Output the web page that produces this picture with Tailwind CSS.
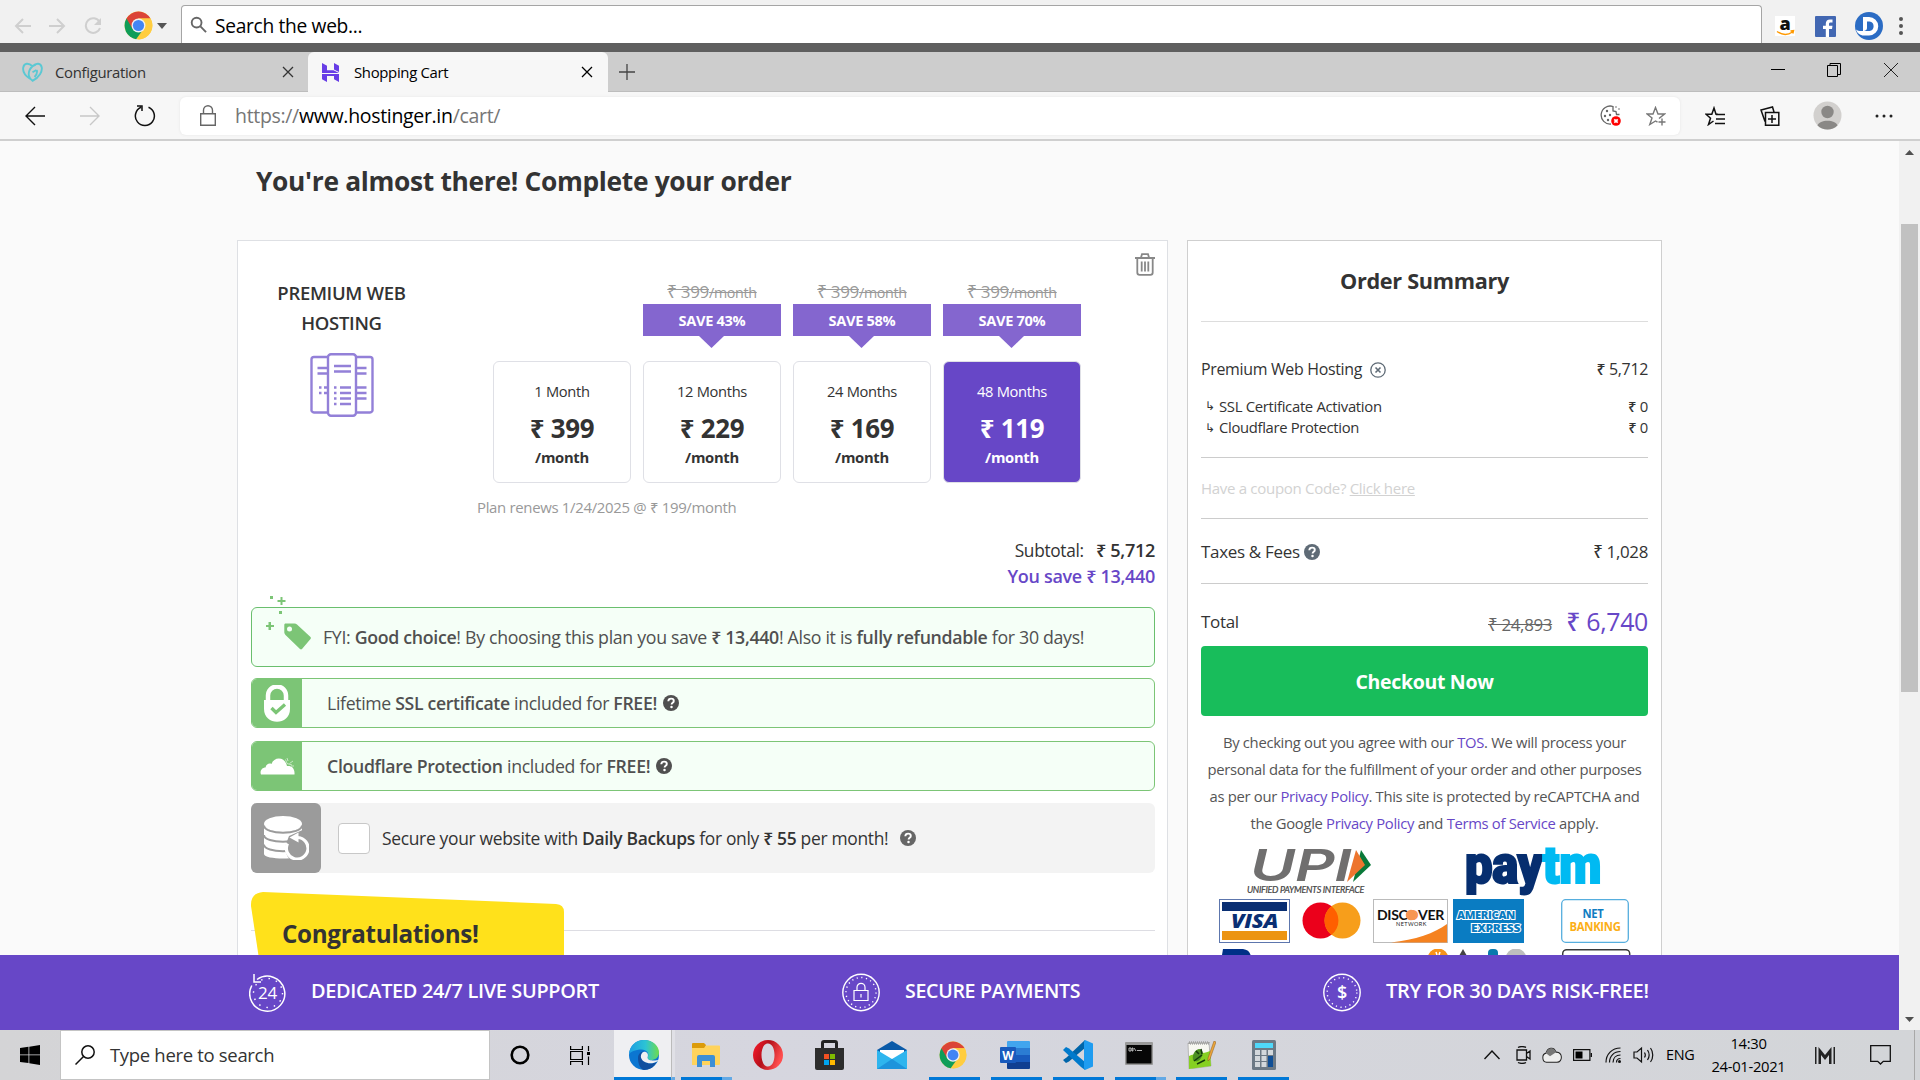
<!DOCTYPE html>
<html lang="en">
<head>
<meta charset="utf-8">
<title>Shopping Cart</title>
<script src="https://cdn.jsdelivr.net/npm/@tailwindcss/browser@4"></script>
</head>
<body class="w-[1920px] h-[1080px] overflow-hidden bg-[#fafafa] font-['Open_Sans','Noto_Sans',sans-serif] tracking-[-0.32px] text-[#333] flex flex-col">

<svg class="hidden">
  <symbol id="chrome" viewBox="0 0 48 48">
    <circle cx="24" cy="24" r="23" fill="#ffcd40"/>
    <path d="M24 24 4.1 12.5A23 23 0 0 0 20 46.7L32 30z" fill="#0f9d58"/>
    <path d="M24 12.5h19.9A23 23 0 0 0 4.1 12.5L14 29.5z" fill="#db4437"/>
    <path d="M34 29.500 24 47a23 23 0 0 0 19.900-34.500H24z" fill="#ffcd40"/>
    <circle cx="24" cy="24" r="11.500" fill="#f1f1f1"/>
    <circle cx="24" cy="24" r="9.300" fill="#4285f4"/>
  </symbol>
  <symbol id="question" viewBox="0 0 16 16">
    <circle cx="8" cy="8" r="8" fill="currentColor"/>
    <path d="M5.300 6.200C5.400 4.500 6.500 3.600 8.100 3.600c1.600 0 2.700.9 2.700 2.300 0 1.900-2.200 1.900-2.200 3.500" fill="none" stroke="#fff" stroke-width="1.900"/>
    <circle cx="8.500" cy="11.900" r="1.250" fill="#fff"/>
  </symbol>
  <symbol id="close" viewBox="0 0 12 12"><path d="M1 1l10 10M11 1 1 11" stroke="currentColor" stroke-width="1.300"/></symbol>
</svg>

<!-- outer search bar -->
<header class="h-[43px] shrink-0 bg-[#f1f1f1] flex">
  <div class="flex items-center pt-2 pl-[14px] text-[#cfcfcf]">
    <svg class="w-[18px] h-[18px]" viewBox="0 0 18 18" fill="none" stroke="currentColor" stroke-width="2"><path d="M17 9H2M9 2 2 9l7 7"/></svg>
    <svg class="w-[18px] h-[18px] ml-4" viewBox="0 0 18 18" fill="none" stroke="currentColor" stroke-width="2"><path d="M1 9h15M9 2l7 7-7 7"/></svg>
    <svg class="w-[18px] h-[18px] ml-[18px]" viewBox="0 0 18 18" fill="none" stroke="currentColor" stroke-width="2"><path d="M15.500 5A7.300 7.300 0 1 0 16 11"/><path d="M17 1v7h-7z" fill="currentColor" stroke="none"/></svg>
    <svg class="w-[29px] h-[29px] ml-[22px]"><use href="#chrome"/></svg>
    <svg class="w-[10px] h-[6px] ml-1" viewBox="0 0 10 6"><path d="M0 0h10L5 6z" fill="#555"/></svg>
  </div>
  <div class="ml-[14px] mt-[5px] w-[1581px] border border-b-0 border-[#a5a5a5] rounded-t bg-white flex items-center pl-2 pt-1">
    <svg class="w-[17px] h-[17px] -mt-1" viewBox="0 0 18 18" fill="none" stroke="#666" stroke-width="2"><circle cx="7" cy="7" r="5.200"/><path d="m11 11 6 6"/></svg>
    <span class="ml-2 text-[19.200px] text-black">Search the web...</span>
  </div>
  <div class="flex items-center pt-[9px] ml-[13px]">
    <svg class="w-5 h-5 overflow-visible" viewBox="0 0 20 20"><rect width="20" height="20" fill="#fff"/><text x="10" y="14" text-anchor="middle" font-family="Open Sans, sans-serif" font-weight="800" font-size="18" fill="#111">a</text><path d="M2 15.500c5 3.500 11 3.500 15.500.5M15.500 15l3-.3-.7 2.800" fill="none" stroke="#f90" stroke-width="1.500"/></svg>
    <svg class="w-[21px] h-[21px] ml-5" viewBox="0 0 21 21"><rect width="21" height="21" rx="1" fill="#4267b2"/><path d="M14 21v-8h3l.5-3.200H14V8c0-1 .4-1.600 1.700-1.600h1.800V3.600C17 3.500 16 3.400 15 3.400c-2.600 0-4.200 1.500-4.200 4.200v2.200H8V13h2.800v8z" fill="#fff"/></svg>
    <svg class="w-7 h-7 ml-[19px]" viewBox="0 0 28 28"><circle cx="14" cy="14" r="14" fill="#2b6cc4"/><path d="M8 5h6a9 9 0 0 1 0 18.500H9C5 23.500 2 21 1 17.500c2 1.500 4 1.800 7 1.500z" fill="#fff"/><path d="M12 9.500h2.500a4.800 4.800 0 0 1 0 9.500H9c2-.4 3-1.500 3-3z" fill="#2b6cc4"/></svg>
    <svg class="w-1 h-5 ml-[16px]" viewBox="0 0 4 20" fill="#555"><circle cx="2" cy="3" r="2"/><circle cx="2" cy="10" r="2"/><circle cx="2" cy="17" r="2"/></svg>
  </div>
</header>
<div class="h-[9px] shrink-0 bg-[#5f5f5f]"></div>

<!-- tab strip -->
<div class="h-10 shrink-0 bg-[#cdcdcd] flex text-[14.900px] leading-5 shadow-[inset_0_-1px_0_#bdbdbd]">
  <div class="w-[308px] flex items-center pl-[22px]">
    <svg class="w-[21px] h-5" viewBox="0 0 21 20" fill="none" stroke="#5bc8d3" stroke-width="1.900"><path d="M8 16.800C3 13.500.5 9 1.300 5.200 2.200 1 6.500.5 10.500 4.300c4-3.800 8.300-3.300 9.200.9.800 4-2.200 10-9.200 13.600-3.500-2-5-7-2.500-11.500C9.500 4.500 11.500 3 14 2.500M14.500 8l-4 2.300M14.800 8c.7 3-.3 5.200-2.300 7"/></svg>
    <span class="ml-3 -mt-px">Configuration</span>
    <svg class="w-3 h-3 ml-auto mr-[14px] text-[#333]"><use href="#close"/></svg>
  </div>
  <div class="w-[300px] h-10 bg-[#f7f7f7] rounded-t-md flex items-center pl-[14px]">
    <svg class="w-[17px] h-[19px]" viewBox="0 0 17 19" fill="#673de6"><path d="M0 0l5 2.700v4.600h6.500L17 10H0zM12 0l5 2.700V9l-5-2.600zM0 11h17v8l-5-2.700V13H5v6l-5-2.700z"/></svg>
    <span class="ml-[15px] -mt-px text-black">Shopping Cart</span>
    <svg class="w-3 h-3 ml-auto mr-[15px] text-black"><use href="#close"/></svg>
  </div>
  <div class="flex items-center pl-[11px]"><svg class="w-4 h-4" viewBox="0 0 16 16" stroke="#444" stroke-width="1.300"><path d="M8 0v16M0 8h16"/></svg></div>
  <div class="ml-auto flex items-center text-black pr-[22px] pb-1">
    <svg class="w-[14px] h-3" viewBox="0 0 14 12"><path d="M0 5.500h14" stroke="#000"/></svg>
    <svg class="w-[14px] h-[14px] ml-[42px]" viewBox="0 0 14 14" fill="none" stroke="#000"><path d="M.5 2.500h10v11H.5zM3 2.500v-2h10.500v11h-3"/></svg>
    <svg class="w-[14px] h-[14px] ml-[43px]" viewBox="0 0 14 14" stroke="#222"><path d="M0 0l14 14M14 0 0 14"/></svg>
  </div>
</div>

<!-- address bar -->
<div class="h-[49px] shrink-0 bg-[#f7f7f7] border-b-2 border-[#cfcfcf] flex items-center">
  <svg class="w-5 h-5 ml-[25px]" viewBox="0 0 20 20" fill="none" stroke="#111" stroke-width="1.400"><path d="M20 10H1M10 1 1 10l9 9"/></svg>
  <svg class="w-5 h-5 ml-[35px]" viewBox="0 0 20 20" fill="none" stroke="#c8c8c8" stroke-width="1.400"><path d="M0 10h19M10 1l9 9-9 9"/></svg>
  <svg class="w-[22px] h-[22px] ml-[34px]" viewBox="0 0 22 22" fill="none" stroke="#111" stroke-width="1.500"><path d="M14.500 2.200A9.500 9.500 0 1 1 7 2.300M3 1h5v5"/></svg>
  <div class="ml-[24px] w-[1500px] h-[38px] bg-white rounded-md shadow-[0_0_3px_#e4e4e4] flex items-center pl-5">
    <svg class="w-4 h-[21px]" viewBox="0 0 16 21" fill="none" stroke="#666" stroke-width="1.400"><path d="M.7 8.700h14.600v11.500H.7zM3.500 8.500V5.200a4.500 4.500 0 0 1 9 0v3.300"/></svg>
    <span class="ml-[19px] text-[19.500px] text-[#767676]">https://<span class="text-black">www.hostinger.in</span>/cart/</span>
    <svg class="w-[21px] h-[21px] ml-auto" viewBox="0 0 21 21"><path d="M19.500 9.500h-3l-.5-3-3-.5V1.500A9 9 0 1 0 11 19" fill="none" stroke="#666" stroke-width="1.300"/><g fill="#666"><circle cx="7" cy="6" r="1.200"/><circle cx="5" cy="11" r="1.200"/><circle cx="10" cy="10" r="1.200"/><circle cx="8" cy="15" r="1.200"/><circle cx="16" cy="2" r=".8"/><circle cx="19" cy="4" r=".8"/></g><circle cx="16" cy="16" r="4.800" fill="#f00"/><path d="m14.300 14.300 3.400 3.400m0-3.400-3.400 3.400" stroke="#fff" stroke-width="1.700"/></svg>
    <svg class="w-5 h-5 ml-[25px] mr-[14px]" viewBox="0 0 20 20" fill="none" stroke="#777" stroke-width="1.400"><path d="m13 12.500 5.500-4.500H12L9.500 1.500 7 8H1l5 4-2.200 6.500L9.500 15l2 1.200M16 12.500v7M12.500 16h7"/></svg>
  </div>
  <svg class="w-5 h-5 ml-[25px]" viewBox="0 0 20 20" fill="none" stroke="#111" stroke-width="1.500"><path d="M13 8.300h-2L9 2 6.800 8.200H1l4.500 4L3.500 18.500l5-3.500M11 8.500h9M11 13h9M10 17.500h10"/></svg>
  <svg class="w-5 h-5 ml-[35px]" viewBox="0 0 20 20" fill="none" stroke="#111" stroke-width="1.500"><path d="M5.500 6.500h13.300v12.700H5.500zM12 9v8M8 13h8M5 15.500 1 4l11.500-3 1.500 5"/></svg>
  <svg class="w-[29px] h-[29px] ml-[33px]" viewBox="0 0 29 29"><circle cx="14.500" cy="14.500" r="14" fill="#d2d0ce"/><circle cx="14.500" cy="11" r="6.200" fill="#8a8886"/><path d="M4.500 24.500c1.500-6.500 18.500-6.500 20 0-5 5.300-15 5.300-20 0z" fill="#8a8886"/></svg>
  <svg class="w-[18px] h-1 ml-[33px]" viewBox="0 0 18 4" fill="#222"><circle cx="2" cy="2" r="1.500"/><circle cx="9" cy="2" r="1.500"/><circle cx="16" cy="2" r="1.500"/></svg>
</div>

<!-- page + scrollbar -->
<div class="flex h-[889px] shrink-0">
 <div class="w-[1899px] flex flex-col">
  <main class="h-[814px] overflow-hidden pl-[237px]">
    <h1 class="ml-[19px] mt-[22px] h-[37px] leading-[37px] text-[26.350px] font-bold whitespace-nowrap">You're almost there! Complete your order</h1>
    <div class="mt-[40px] flex gap-[19px] items-start">

      <section class="w-[931px] h-[760px] bg-white border border-[#dee0e4] pl-[13px] pr-3">
        <div class="flex">
          <div class="w-[181px] flex flex-col items-center pt-[37px]">
            <h2 class="text-[18.500px] leading-[30px] font-semibold text-center">PREMIUM WEB<br>HOSTING</h2>
            <svg class="w-16 h-16 mt-[15px]" viewBox="0 0 64 64" fill="none" stroke="#9380d8" stroke-width="2.400"><rect x="18" y="1.300" width="28" height="61.400" rx="3"/><path d="M18 4H4a2.500 2.500 0 0 0-2.500 2.500v50A2.500 2.500 0 0 0 4 59.500h14M46 4h14a2.500 2.500 0 0 1 2.500 2.500v50a2.500 2.500 0 0 1-2.500 3H46M24 13h17M24 18.500h17M7.500 15H18M7.500 20.500H18M46 15h10.500M46 20.500h10.500M46 34.500h10.500M46 40h10.500M46 45.500h10.500M30 34.500h11M30 40h11M30 45.500h11M30 51h11M24 34.500h2.500M24 40h2.500M24 45.500h2.500M24 51h2.500M9 34.500h2.500M9 40h2.500M14 34.500h3M14 40h3"/></svg>
          </div>
          <div class="ml-[45px] pt-[37px]">
            <div class="pl-4 flex gap-3 items-end text-center">
              <div class="w-[138px] h-[122px] border border-[#dfe0e6] rounded-md flex flex-col items-center pt-[15px]">
                <span class="text-[14.700px] leading-7">1 Month</span>
                <span class="text-[25.900px] leading-[34px] mt-[6px] font-bold">₹ 399</span>
                <span class="text-[14.800px] leading-6 font-bold">/month</span>
              </div>
              <div class="w-[138px]">
                <div class="h-[26px] leading-[28px] text-[#999] line-through text-[14.300px]"><span class="text-[17px]">₹ 399</span>/month</div>
                <div class="h-8 leading-8 bg-[#8466cf] text-white font-bold text-[14.600px]">SAVE 43%</div>
                <svg class="ml-14 w-[25px] h-3" viewBox="0 0 25 12"><path d="M0 0h25L12.500 12z" fill="#8466cf"/></svg>
                <div class="mt-[13px] h-[122px] border border-[#dfe0e6] rounded-md flex flex-col items-center pt-[15px]">
                  <span class="text-[14.700px] leading-7">12 Months</span>
                  <span class="text-[25.900px] leading-[34px] mt-[6px] font-bold">₹ 229</span>
                  <span class="text-[14.800px] leading-6 font-bold">/month</span>
                </div>
              </div>
              <div class="w-[138px]">
                <div class="h-[26px] leading-[28px] text-[#999] line-through text-[14.300px]"><span class="text-[17px]">₹ 399</span>/month</div>
                <div class="h-8 leading-8 bg-[#8466cf] text-white font-bold text-[14.600px]">SAVE 58%</div>
                <svg class="ml-14 w-[25px] h-3" viewBox="0 0 25 12"><path d="M0 0h25L12.500 12z" fill="#8466cf"/></svg>
                <div class="mt-[13px] h-[122px] border border-[#dfe0e6] rounded-md flex flex-col items-center pt-[15px]">
                  <span class="text-[14.700px] leading-7">24 Months</span>
                  <span class="text-[25.900px] leading-[34px] mt-[6px] font-bold">₹ 169</span>
                  <span class="text-[14.800px] leading-6 font-bold">/month</span>
                </div>
              </div>
              <div class="w-[138px]">
                <div class="h-[26px] leading-[28px] text-[#999] line-through text-[14.300px]"><span class="text-[17px]">₹ 399</span>/month</div>
                <div class="h-8 leading-8 bg-[#8466cf] text-white font-bold text-[14.600px]">SAVE 70%</div>
                <svg class="ml-14 w-[25px] h-3" viewBox="0 0 25 12"><path d="M0 0h25L12.500 12z" fill="#8466cf"/></svg>
                <div class="mt-[13px] h-[122px] border border-[#dfe0e6] rounded-md flex flex-col items-center pt-[15px] bg-[#6747c7] text-white">
                  <span class="text-[14.700px] leading-7">48 Months</span>
                  <span class="text-[25.900px] leading-[34px] mt-[6px] font-bold">₹ 119</span>
                  <span class="text-[14.800px] leading-6 font-bold">/month</span>
                </div>
              </div>
            </div>
            <p class="h-12 leading-[48px] text-[14.950px] text-[#999]">Plan renews 1/24/2025 @ ₹ 199/month</p>
          </div>
          <svg class="w-5 h-[23px] ml-auto mt-[12px]" viewBox="0 0 20 23" fill="none" stroke="#888" stroke-width="1.800"><path d="M0 5h20M2.300 5v14.500a2.300 2.300 0 0 0 2.300 2.300h10.800a2.300 2.300 0 0 0 2.300-2.300V5M6 4.500 7 1.200h6l1 3.300M6.700 8.500v10M10 8.500v10M13.300 8.500v10"/></svg>
        </div>
        <div class="mt-[5px] h-7 leading-7 text-right text-[17.300px]">Subtotal: <span class="ml-2 font-semibold text-[18.100px]">₹ 5,712</span></div>
        <div class="h-[26px] leading-[25px] text-right text-[18px] font-semibold text-[#6747c7]">You save ₹ 13,440</div>

        <div class="relative mt-[17px] h-[60px] border border-[#6abf6e] rounded-md bg-[#f5fff7] flex items-center pl-[71px] text-[17.750px] text-[#505050] whitespace-pre">
          <svg class="absolute left-[13px] -top-[14px] w-12 h-14" viewBox="0 0 48 56" fill="#7cc576"><path d="M20 29.500h9.500a4 4 0 0 1 2.500 1l13.500 12.500a1.500 1.500 0 0 1 0 2L37 55a1.500 1.500 0 0 1-2 0L20.500 41a4 4 0 0 1-1.200-2.500v-8z"/><circle cx="24.500" cy="35" r="2.500" fill="#f5fff7"/><path d="M15.500 3h2v3h3v2h-3v3h-2V8h-3V6h3zM3.500 28h2.500v3h3v2H6v3H3.500v-3H1v-2h2.500zM5 2h3v3H5zM14 17h3v3h-3z"/></svg>
          <span>FYI: <b class="font-semibold">Good choice</b>! By choosing this plan you save <b class="font-semibold">₹ 13,440</b>! Also it is <b class="font-semibold">fully refundable</b> for 30 days!</span>
        </div>

        <div class="mt-[11px] h-[50px] border border-[#7cc576] rounded-md bg-[#f5fff7] flex items-center overflow-hidden text-[17.650px] text-[#505050]">
          <div class="w-[50px] h-full bg-[#7cc576] flex items-center justify-center"><svg class="w-[26px] h-[37px]" viewBox="0 0 26 37"><path d="M4 17V10.500a9 9 0 0 1 18 0V17" fill="none" stroke="#fff" stroke-width="4.500"/><path d="M0 15h26v9c0 17-26 17-26 0z" fill="#fff"/><path d="m7.500 23 4.500 4.500 9-8" fill="none" stroke="#7cc576" stroke-width="3.300"/></svg></div>
          <span class="ml-[25px]">Lifetime <b class="font-semibold">SSL certificate</b> included for <b class="font-semibold">FREE!</b></span>
          <svg class="w-4 h-4 ml-[6px]"><use href="#question"/></svg>
        </div>

        <div class="mt-[13px] h-[50px] border border-[#7cc576] rounded-md bg-[#f5fff7] flex items-center overflow-hidden text-[17.700px] text-[#505050]">
          <div class="w-[50px] h-full bg-[#7cc576] flex items-center justify-center"><svg class="w-[35px] h-[17px]" viewBox="0 0 35 17"><path d="M1 16.500C-.5 13 2 9.500 5.500 9.500 6.500 5.500 9.500 5 11.500 6 14-1.500 25-1.500 27 8c5-.5 8 2.500 7.500 8.500z" fill="#fff"/><path d="m27 0 1 3M33 3l-3.500 2.500M34 8h-3M25.500 1.500l1.500 4 5 1.500" fill="none" stroke="#cfeacc" stroke-width=".9"/></svg></div>
          <span class="ml-[25px]"><b class="font-semibold">Cloudflare Protection</b> included for <b class="font-semibold">FREE!</b></span>
          <svg class="w-4 h-4 ml-[6px]"><use href="#question"/></svg>
        </div>

        <div class="mt-3 h-[70px] rounded-md bg-[#f3f3f3] flex items-center text-[17.450px]">
          <div class="w-[70px] h-full bg-[#9b9b9b] rounded-md flex items-center justify-center"><svg class="w-[46px] h-11" viewBox="0 0 46 44"><path d="M1 8c0 10 38 10 38 0v30c0 6-38 6-38 0z" fill="#fff"/><ellipse cx="20" cy="8" rx="19" ry="8" fill="#fff"/><path d="M1 9.500c0 9.500 38 9.500 38 0M1 19c0 9 38 9 38 0M1 28.500c0 9 38 9 38 0" fill="none" stroke="#9b9b9b" stroke-width="2"/><path d="M39.500 14v30H28a14 14 0 0 1-5-16l3-8z" fill="#9b9b9b"/><path d="M35 21.500a10.800 10.800 0 1 1-10.500 6" fill="none" stroke="#fff" stroke-width="3.200"/><path d="m26.500 21.500 9-5v10z" fill="#fff"/></svg></div>
          <div class="ml-[17px] w-8 h-[31px] border border-[#c8c8c8] rounded bg-white"></div>
          <span class="ml-3">Secure your website with <b class="font-semibold">Daily Backups</b> for only <b class="font-semibold">₹ 55</b> per month!</span>
          <svg class="w-4 h-4 ml-3 text-[#666]"><use href="#question"/></svg>
        </div>

        <div class="relative mt-[19px] h-20">
          <div class="absolute top-[38px] inset-x-0 border-t border-[#dddde3]"></div>
          <svg class="absolute left-0 top-0 w-[313px] h-20" viewBox="0 0 313 80"><path d="M12 0 305 12q8 .5 8 8v60H10L0 14Q-.5 1 12 0z" fill="#ffe11b"/></svg>
          <h3 class="relative pt-6 pl-[31px] text-[24.200px] leading-9 font-bold">Congratulations!</h3>
        </div>
      </section>

      <aside class="w-[475px] h-[760px] bg-white border border-[#cfcfcf] px-[13px] flex flex-col">
        <h2 class="h-20 leading-[80px] text-center text-[21.700px] font-bold border-b border-[#ddd] box-content">Order Summary</h2>
        <div class="mt-[33px] h-[30px] flex items-center text-[15.950px]">Premium Web Hosting
          <svg class="w-4 h-4 ml-2" viewBox="0 0 16 16" fill="none" stroke="#5f6b76" stroke-width="1.300"><circle cx="8" cy="8" r="7.200"/><path d="m5.500 5.500 5 5m0-5-5 5" stroke-width="1.600"/></svg>
          <span class="ml-auto font-medium">₹ 5,712</span>
        </div>
        <div class="mt-[10px] h-[22px] flex items-center text-[14.900px] pl-1"><span class="w-[14px] text-[12px]">↳</span>SSL Certificate Activation<span class="ml-auto font-medium">₹ 0</span></div>
        <div class="h-[21px] flex items-center text-[14.800px] pl-1"><span class="w-[14px] text-[12px]">↳</span>Cloudflare Protection<span class="ml-auto font-medium">₹ 0</span></div>
        <div class="mt-[19px] border-y border-[#ccc] h-[62px] leading-[60px] text-[15.050px] text-[#d2d2d2]">Have a coupon Code? <a class="underline">Click here</a></div>
        <div class="h-[65px] border-b border-[#ccc] flex items-center text-[17px] pt-[2px]">Taxes &amp; Fees
          <svg class="w-4 h-4 ml-1 text-[#5f6b76]"><use href="#question"/></svg>
          <span class="ml-auto text-[16.900px] font-medium">₹ 1,028</span>
        </div>
        <div class="mt-[13px] h-[49px] flex items-center text-[17px]">Total
          <span class="ml-auto mt-[6px] text-[16.900px] line-through text-[#666]">₹ 24,893</span>
          <span class="ml-[14px] mt-px text-[24.900px] font-medium text-[#6747c7]">₹ 6,740</span>
        </div>
        <button class="h-[70px] shrink-0 rounded bg-[#18bd5b] text-white text-[19.500px] font-bold pt-[2px]">Checkout Now</button>
        <p class="mt-[13px] h-[108px] leading-[27px] text-center text-[14.820px] text-[#555] whitespace-nowrap">By checking out you agree with our <a class="text-[#6747c7]">TOS</a>. We will process your<br>personal data for the fulfillment of your order and other purposes<br>as per our <a class="text-[#6747c7]">Privacy Policy</a>. This site is protected by reCAPTCHA and<br>the Google <a class="text-[#6747c7]">Privacy Policy</a> and <a class="text-[#6747c7]">Terms of Service</a> apply.</p>
        <div class="mt-3 flex items-start">
          <svg class="w-[124px] h-[45px] ml-[46px] overflow-visible" viewBox="0 0 124 45"><text x="3" y="32" font-family="Inter, sans-serif" font-style="italic" font-weight="600" font-size="44" textLength="101" lengthAdjust="spacingAndGlyphs" fill="#706f6f">UPI</text><path d="m114 1 10 15-18 17z" fill="#097939"/><path d="m109 1 9 15-18 17z" fill="#ed752e"/><text x="0" y="43.500" font-family="Lato, sans-serif" font-style="italic" font-size="9" textLength="117" lengthAdjust="spacingAndGlyphs" fill="#444" stroke="#444" stroke-width=".2">UNIFIED PAYMENTS INTERFACE</text></svg>
          <svg class="w-[140px] h-[47px] ml-[93px] overflow-visible" viewBox="0 0 140 47"><text x="1" y="34" font-family="Roboto, sans-serif" font-weight="900" font-size="51" textLength="136" lengthAdjust="spacingAndGlyphs" stroke-width="2" fill="#062e6f" stroke="#062e6f">pay<tspan fill="#00baf2" stroke="#00baf2">tm</tspan></text></svg>
        </div>
        <div class="mt-[3px] flex items-start pl-[18px]">
          <svg class="w-[71px] h-11 shrink-0" viewBox="0 0 71 44"><rect x=".5" y=".5" width="70" height="43" fill="#fff" stroke="#5d76ad"/><path d="M3 3h65v9H3z" fill="#0a2f73"/><path d="M3 32h65v9H3z" fill="#ec9412"/><text x="12" y="29" font-family="Open Sans, sans-serif" font-style="italic" font-weight="800" font-size="20" textLength="47" lengthAdjust="spacingAndGlyphs" fill="#0a2f73">VISA</text></svg>
          <svg class="w-[59px] h-11 ml-3 shrink-0" viewBox="0 0 59 44"><circle cx="18.500" cy="21.500" r="18" fill="#eb001b"/><circle cx="40.500" cy="21.500" r="18" fill="#f79e1b"/><path d="M29.500 7.300a18 18 0 0 1 0 28.400 18 18 0 0 1 0-28.400z" fill="#ff5f00"/></svg>
          <svg class="w-[75px] h-11 ml-[12px] shrink-0" viewBox="0 0 75 44"><rect x=".5" y=".5" width="74" height="43" fill="#fff" stroke="#bbb"/><path d="M74 25C62 34 42 41 18 43.500h56z" fill="#f58220"/><text x="4" y="21" font-family="Lato, sans-serif" font-weight="700" font-size="14" textLength="67" lengthAdjust="spacingAndGlyphs" fill="#111">DISC<tspan fill="#f79552">O</tspan>VER</text><circle cx="38" cy="16" r="5.300" fill="#f79552"/><text x="23" y="27" font-family="Lato, sans-serif" font-size="5.500" textLength="30" fill="#222">NETWORK</text></svg>
          <svg class="w-[71px] h-11 ml-[5px] shrink-0" viewBox="0 0 71 44"><path d="M0 0h71v44H0z" fill="#0a7cc2"/><g font-family="Open Sans, sans-serif" font-weight="800" font-size="11" fill="#0a7cc2" stroke="#fff" stroke-width="2" paint-order="stroke"><text x="4" y="19.500" textLength="58" lengthAdjust="spacingAndGlyphs">AMERICAN</text><text x="18" y="33" textLength="49" lengthAdjust="spacingAndGlyphs">EXPRESS</text></g></svg>
          <svg class="w-[68px] h-11 ml-[37px] shrink-0" viewBox="0 0 68 44"><rect x=".7" y=".7" width="66.600" height="42.600" rx="4" fill="#fff" stroke="#56aede" stroke-width="1.300"/><g font-family="Open Sans, sans-serif" font-weight="700" font-size="12"><text x="21.500" y="18.500" textLength="21" lengthAdjust="spacingAndGlyphs" fill="#0f7dc2">NET</text><text x="8.500" y="32" textLength="51" lengthAdjust="spacingAndGlyphs" fill="#fcaf17">BANKING</text></g></svg>
        </div>
        <svg class="mt-[6px] w-[447px] h-5 shrink-0" viewBox="0 0 447 20"><path d="M22 0h20q9 1 8 12H20z" fill="#003087"/><circle cx="237" cy="10" r="10.500" fill="#f7931a"/><path d="m235 3 1 3m3-3-1 3" stroke="#fff" stroke-width="1.500"/><path d="m262 0 4 7h-8z" fill="#444"/><rect x="287" y="0" width="10" height="14" rx="4" fill="#0a7aad"/><circle cx="315" cy="10" r="10.500" fill="#bebebe"/><rect x="361.700" y=".7" width="67" height="40" rx="4" fill="#fff" stroke="#3a3a3a" stroke-width="1.500"/></svg>
      </aside>
    </div>
  </main>

  <!-- guarantees -->
  <div class="h-[75px] bg-[#6747c7] text-white font-semibold text-[20px] flex items-center pl-[249px] pb-[3px]">
    <svg class="w-[38px] h-[39px] mt-[2px]" viewBox="0 0 38 39" fill="none" stroke="#fff" stroke-width="1.500"><path d="M2.800 12.500A17.500 17.500 0 1 0 8 6.500M5 1v8h7"/><circle cx="19" cy="20" r="14.500" stroke-dasharray="1.500 6.100" stroke-width="1.400"/><text x="18.500" y="25.500" text-anchor="middle" font-size="17" font-weight="400" fill="#fff" stroke="none" font-family="Open Sans, sans-serif">24</text></svg>
    <span class="ml-[24px] w-[531px] text-[19.900px]">DEDICATED 24/7 LIVE SUPPORT</span>
    <svg class="w-[38px] h-[39px] mt-[2px]" viewBox="0 0 38 39" fill="none" stroke="#fff" stroke-width="1.400"><circle cx="19" cy="19.500" r="18.200"/><circle cx="19" cy="19.500" r="15" stroke-dasharray="1.200 3.500"/><path d="M12 17.500h14v10H12zM15 17.500v-3.200a4 4 0 0 1 8 0v3.200M19 21v3.500" stroke-width="1.200"/></svg>
    <span class="ml-[25px] w-[418px] text-[19.600px]">SECURE PAYMENTS</span>
    <svg class="w-[38px] h-[39px] mt-[2px]" viewBox="0 0 38 39" fill="none" stroke="#fff" stroke-width="1.400"><circle cx="19" cy="19.500" r="18.200"/><circle cx="19" cy="19.500" r="14.800" stroke-dasharray="1.200 3.500"/><text x="19" y="26" text-anchor="middle" font-size="18" font-weight="600" fill="#fff" stroke="none" font-family="Open Sans, sans-serif">$</text></svg>
    <span class="ml-[25px] text-[20.100px]">TRY FOR 30 DAYS RISK-FREE!</span>
  </div>
 </div>
 <!-- scrollbar -->
 <div class="w-[21px] bg-[#f1f1f1] flex flex-col items-center">
   <svg class="w-[9px] h-[5px] mt-[9px]" viewBox="0 0 9 5"><path d="M0 5h9L4.500 0z" fill="#505050"/></svg>
   <div class="mt-[69px] w-[17px] h-[468px] bg-[#c1c1c1]"></div>
   <svg class="w-[9px] h-[5px] mt-auto mb-2" viewBox="0 0 9 5"><path d="M0 0h9L4.500 5z" fill="#505050"/></svg>
 </div>
</div>

<!-- taskbar -->
<footer class="h-[50px] shrink-0 bg-linear-to-r from-[#d4d4d6] via-[#d6d6df] via-40% to-[#d3d5d8] flex text-black">
  <div class="w-[60px] flex items-center justify-center"><svg class="w-5 h-5" viewBox="0 0 20 20"><path d="M0 3l8.500-1.200v7.700H0zM9.300 1.700 20 0v9.500H9.300zM0 10.300h8.500v7.800L0 17zM9.300 10.300H20V20L9.300 18.300z"/></svg></div>
  <div class="w-[430px] bg-white border border-[#c4c4c4] flex items-center pl-[14px]">
    <svg class="w-5 h-5" viewBox="0 0 20 20" fill="none" stroke="#111" stroke-width="1.500"><circle cx="13" cy="7" r="6.200"/><path d="M8.500 11.500.5 19.500"/></svg>
    <span class="ml-[15px] text-[18.500px] text-[#333]">Type here to search</span>
  </div>
  <div class="w-[60px] flex items-center justify-center"><svg class="w-5 h-5" viewBox="0 0 20 20"><circle cx="10" cy="10" r="8.300" fill="none" stroke="#000" stroke-width="2.600"/></svg></div>
  <div class="w-[64px] flex items-center justify-center pr-1"><svg class="w-5 h-[19px]" viewBox="0 0 20 19" fill="none" stroke="#000" stroke-width="1.200"><path d="M.6 0v3.500h11.800V0M.6 19v-3.500h11.800V19M.6 5.500h11.800v8H.6zM18.500 0v5M18.500 10.500V19"/><path d="M17 6h3v3h-3z" fill="#000" stroke="none"/></svg></div>

  <div class="w-[57px] bg-[#efeff2] border-b-[3px] border-[#0078d7] flex items-center justify-center pt-[2px] pl-[2px]">
    <svg class="w-[30px] h-[30px]" viewBox="0 0 30 30"><defs><linearGradient id="eg" x1="0" x2="1"><stop offset="0" stop-color="#1b9de2"/><stop offset=".55" stop-color="#2cc3d5"/><stop offset="1" stop-color="#6fdc4c"/></linearGradient></defs><circle cx="15" cy="15" r="15" fill="#0b76d1"/><path d="M0 14C1 5 7 0 15 0c9 0 15 6 15 12.500 0 5-4 7.500-8 7.500-3 0-4.500-1-3.500-2.500 2.500-4-1-8-6-8C6 9.500 1.500 12 0 14z" fill="url(#eg)"/><path d="M9 18c0-4 3-6.500 5.500-6.500-3 2-3.500 6 0 9.500 3.500 3 9 3 13 1-2 5-7.500 8-12.500 8C11 29.500 9 23 9 18z" fill="#104f9f"/><path d="M18.500 17.500c2-5-3-7-5-5-3 3-1.500 7 1.500 9 4 2.500 9 2.500 14-.5l1-1c-3 .5-11.500 1.500-11.500-2.500z" fill="#efeff2"/></svg>
  </div>
  <div class="w-1 bg-[#e0e0e6] border-l border-[#bbb] border-b-[3px] border-b-[#63a9e5]"></div>
  <div class="ml-[6px] w-[51px] flex flex-col">
    <div class="flex-1 flex items-center justify-center pt-[2px] pr-[2px]"><svg class="w-7 h-6" viewBox="0 0 28 24"><path d="M0 1a1 1 0 0 1 1-1h11l2 2-1 3H0z" fill="#dc9b0a"/><path d="M0 5h12l2-2.500h13a1 1 0 0 1 1 1V21a1 1 0 0 1-1 1H0z" fill="#ffd35c"/><path d="M5 24V14a2 2 0 0 1 2-2h14a2 2 0 0 1 2 2v10h-5v-6h-8v6z" fill="#3d8fd6"/></svg></div>
    <div class="flex h-[3px]"><div class="w-[41px] bg-[#0078d7]"></div><div class="w-[10px] bg-[#63a9e5]"></div></div>
  </div>
  <div class="ml-[21px] w-[30px] flex items-center"><svg class="w-[30px] h-[30px]" viewBox="0 0 30 30"><defs><linearGradient id="og" x1="0" x2="1" y2=".4"><stop offset="0" stop-color="#ff1b2d"/><stop offset=".5" stop-color="#b3101a"/><stop offset="1" stop-color="#ff4e4e"/></linearGradient></defs><path d="M15 0a15 15 0 0 0 0 30 15 15 0 0 0 0-30zm0 3.500c4 0 6.500 5 6.500 11.500S19 26.500 15 26.500 8.500 21.500 8.500 15 11 3.500 15 3.500z" fill="url(#og)" fill-rule="evenodd"/></svg></div>
  <div class="ml-8 w-[29px] flex items-center"><svg class="w-[29px] h-[30px]" viewBox="0 0 29 30"><path d="M7.500 9V3a1.500 1.500 0 0 1 1.500-1.500h11A1.500 1.500 0 0 1 21.500 3v6" fill="none" stroke="#222" stroke-width="3"/><path d="M0 8h29v20a2 2 0 0 1-2 2H2a2 2 0 0 1-2-2z" fill="#2d2d2d"/><path d="M9 14h5v5H9z" fill="#f25022"/><path d="M15 14h5v5h-5z" fill="#7fba00"/><path d="M9 20h5v5H9z" fill="#00a4ef"/><path d="M15 20h5v5h-5z" fill="#ffb900"/></svg></div>
  <div class="ml-[33px] w-[30px] flex items-center"><svg class="w-[30px] h-7" viewBox="0 0 30 28"><path d="M0 9 15 0l15 9v5H0z" fill="#0a5aa8"/><path d="M3 9h24v9H3z" fill="#fff"/><path d="M0 9v19h30V9L15 18z" fill="#2eb5ee"/><path d="M0 28h30L15 18z" fill="#1d94dc"/></svg></div>
  <div class="ml-[22px] w-[51px] border-b-[3px] border-[#0078d7] flex items-center justify-center pt-[3px] pr-[3px]"><svg class="w-7 h-7"><use href="#chrome"/></svg></div>
  <div class="ml-[11px] w-[51px] border-b-[3px] border-[#0078d7] flex items-center justify-center pt-[3px] pr-[3px]"><svg class="w-[30px] h-7" viewBox="0 0 30 28"><path d="M7 1a1 1 0 0 1 1-1h21a1 1 0 0 1 1 1v6H7z" fill="#41a5ee"/><path d="M7 7h23v7H7z" fill="#2b7cd3"/><path d="M7 14h23v7H7z" fill="#185abd"/><path d="M7 21h23v6a1 1 0 0 1-1 1H8a1 1 0 0 1-1-1z" fill="#103f91"/><rect y="6" width="16" height="16" rx="1" fill="#185abd"/><text x="8" y="18.500" text-anchor="middle" font-family="Open Sans, sans-serif" font-weight="700" font-size="12" fill="#fff">W</text></svg></div>
  <div class="ml-[11px] w-[51px] border-b-[3px] border-[#0078d7] flex items-center justify-center pt-[3px] pr-[2px]"><svg class="w-[30px] h-[30px]" viewBox="0 0 30 30"><path d="M22 0 3.500 17.500 0 20l3 3 3-1.500L22 8z" fill="#0065a9"/><path d="m3 7-3 3 18 17 4 3v-8L6 8.500z" fill="#007acc"/><path d="m22 0 8 3.500v23L22 30l-1-2V2z" fill="#1f9cf0"/></svg></div>
  <div class="ml-[11px] w-[51px] flex flex-col">
    <div class="flex-1 flex items-center justify-center pr-[3px]"><svg class="w-7 h-[23px]" viewBox="0 0 28 23"><rect width="28" height="23" rx="1" fill="#999"/><path d="M1.500 3h25v18.500h-25z" fill="#060606"/><path d="M4 6h2v3H4zM7 6h1v3H7zM9 6l2 3M12 8.500h5" stroke="#ddd" stroke-width=".8" fill="none"/></svg></div>
    <div class="flex h-[3px]"><div class="w-[41px] bg-[#0078d7]"></div><div class="w-[10px] bg-[#63a9e5]"></div></div>
  </div>
  <div class="ml-[10px] w-[51px] border-b-[3px] border-[#0078d7] flex items-center justify-center pt-[3px]"><svg class="w-[29px] h-7" viewBox="0 0 29 28"><path d="M1 2h21l2 23-22 3z" fill="#f7f7f2" stroke="#aaa" stroke-width=".8"/><path d="M2 15c6-3 14-2 21-5l1 15-22 3z" fill="#86d022"/><path d="M6 19c-1-6 2-10 6-11 3 0 5 4 3 7-2 5-5 7-9 4z" fill="#4b8f22"/><path d="m9 10 3 3m2-5 1 5M7 20l8-6m-5 9 8-4" stroke="#153b0c" stroke-width="1.500"/><path d="m27 0 2 1-6 17-2 2v-3z" fill="#eda63a" stroke="#8a5a1a" stroke-width=".5"/><path d="M2 1h20v2H2z" fill="#bbb" stroke="#888" stroke-dasharray="1 1" stroke-width="1"/></svg></div>
  <div class="ml-[11px] w-[51px] border-b-[3px] border-[#0078d7] flex items-center justify-center pt-[3px]"><svg class="w-6 h-[30px]" viewBox="0 0 24 30"><rect width="24" height="30" rx="1.500" fill="#6c7985"/><path d="M3 3h18v5H3z" fill="#4fd8fa"/><path d="M3 10h5v5H3zM9.500 10h5v5h-5zM16 10h5v5h-5zM3 16h5v5H3zM9.500 16h5v5h-5zM3 22h5v5H3zM9.500 22h5v5h-5z" fill="#d3d8dc"/><path d="M16 16h5v11h-5z" fill="#0f4e96"/></svg></div>

  <div class="ml-auto flex items-center">
    <svg class="w-4 h-[10px]" viewBox="0 0 16 10" fill="none" stroke="#111" stroke-width="1.400"><path d="m.5 9 7.500-8 7.500 8"/></svg>
    <svg class="w-[15px] h-[18px] ml-4" viewBox="0 0 15 18" fill="none" stroke="#111" stroke-width="1.300"><path d="M1 4h9.500v10H1zM10.500 7.500 14 5v8l-3.500-2.500M2 1.500C4 .3 8 .3 10 1.500M2 16.500c2 1.200 6 1.200 8 0"/></svg>
    <svg class="w-5 h-[16px] ml-[11px]" viewBox="0 0 20 14" preserveAspectRatio="none"><path d="M4.500 13.300a4 4 0 0 1-.5-7.900C5.500.5 12-.8 14 4.500c7-.5 7 8.800 1 8.800z" fill="#eee" stroke="#222"/><path d="M4 5.400C5.500.5 12-.8 14 4.500L8 8z" fill="#777"/></svg>
    <svg class="w-[19px] h-3 ml-[11px]" viewBox="0 0 19 12"><path d="M.6.6h16.300v10.800H.6zM18.400 4v4" fill="none" stroke="#111" stroke-width="1.200"/><path d="M2.500 2.500h7v7h-7z"/></svg>
    <svg class="w-4 h-4 ml-[13px]" viewBox="0 0 16 16" fill="none" stroke="#111" stroke-width="1.200"><path d="M1 15.500C1 7 7 1 15.500 1M4.500 15.500C4.500 9 9 4.500 15.500 4.500M8 15.500c0-4.500 3-7.500 7.500-7.500M11.500 15.500c0-2.500 1.500-4 4-4"/><circle cx="14.500" cy="14.500" r="1.500" fill="#111" stroke="none"/></svg>
    <svg class="w-[21px] h-[18px] ml-3" viewBox="0 0 21 18" fill="none" stroke="#111" stroke-width="1.200"><path d="M1 6h3l4.500-4v14L4 12H1zM11.500 6.500c1 1.500 1 3.500 0 5M14.500 4c2 3 2 7 0 10M17.500 2c3 4 3 10 0 14"/></svg>
    <span class="ml-3 w-[30px] text-[14.400px]">ENG</span>
    <div class="ml-[14px] w-[77px] text-center text-[14.800px] leading-[23px] whitespace-nowrap">14:30<br>24-01-2021</div>
    <svg class="w-5 h-[17px] ml-7" viewBox="0 0 20 17" fill="#222"><path d="M0 0h1.500v17H0zM18.500 0H20v17h-1.500zM3.500 0 10 8l6.500-8v17H14V8l-4 5-4-5v9H3.500z"/></svg>
    <svg class="w-[21px] h-5 ml-[35px] mr-[23px]" viewBox="0 0 21 20" fill="none" stroke="#111" stroke-width="1.300"><path d="M.7.7h19.600v15.600h-7L10.500 19l-2.800-2.700h-7z"/></svg>
    <div class="h-[50px] w-[6px] border-l border-[#a8a8a8]"></div>
  </div>
</footer>
</body>
</html>
